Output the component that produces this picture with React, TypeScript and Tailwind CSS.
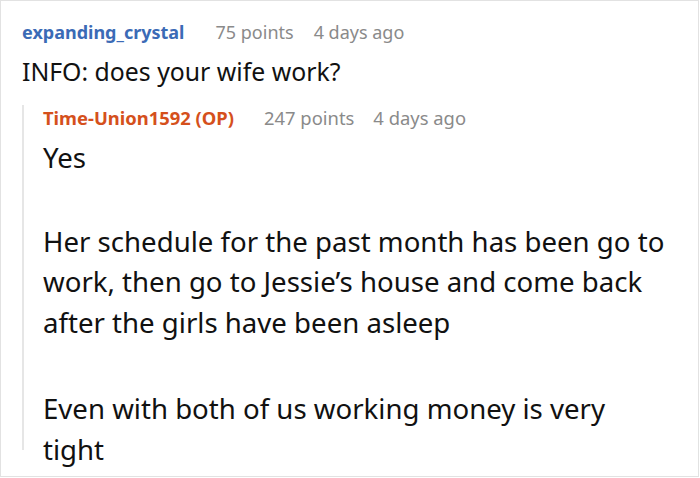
import React from "react";

export default function App() {
  return (
    <div
      className="w-[700px] h-[478px] bg-white overflow-hidden"
      style={{ fontFamily: '"Noto Sans", "Open Sans", sans-serif' }}
    >
      <div className="w-[699px] h-[477px] border border-[#e2e2e2] bg-white pl-[21px] pt-[18px]">
        <div className="flex items-baseline text-[18px] leading-[26px]">
          <span className="font-bold text-[#3b6bb6]">expanding_crystal</span>
          <span className="ml-[31px] text-[#8a8a8a]">75 points</span>
          <span className="ml-[20px] text-[#8a8a8a]">4 days ago</span>
        </div>
        <div className="text-[24.8px] leading-[34px] text-[#111] mt-[9px]">INFO: does your wife work?</div>
        <div className="mt-[27px] border-l-2 border-[#e6e6e6] pl-[19px] h-[345px] w-[650px]">
          <div className="flex items-baseline text-[18.4px] leading-[26px] -mt-[10px]">
            <span className="font-bold text-[#d5501c]">Time-Union1592 (OP)</span>
            <span className="ml-[30px] text-[#8a8a8a]">247 points</span>
            <span className="ml-[19px] text-[#8a8a8a]">4 days ago</span>
          </div>
          <div className="text-[27.6px] leading-[40.5px] text-[#111] mt-[6px] w-[626px]">
            <p>Yes</p>
            <p className="mt-[43px]">
              Her schedule for the past month has been go to work, then go to Jessie’s house and come back after the girls have been asleep
            </p>
            <p className="mt-[46px]">Even with both of us working money is very tight</p>
          </div>
        </div>
      </div>
    </div>
  );
}
